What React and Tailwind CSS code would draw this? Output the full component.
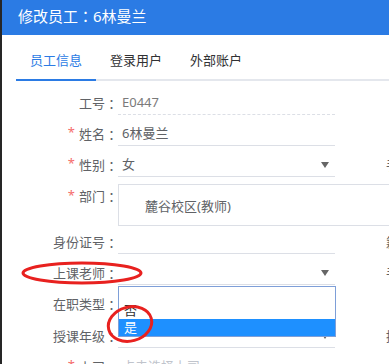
import React from 'react'

// small filled caret used by the select fields
function Caret() {
  return (
    <svg width="8" height="6" viewBox="0 0 8 6" className="shrink-0">
      <path d="M0 0 H8 L4 6 Z" fill="#666" />
    </svg>
  )
}

// full-width colon, centred like the original UI font
function Colon() {
  return <span className="font-['Noto_Sans_CJK_TC',sans-serif]">：</span>
}

function Label({ text, required, h = 'h-[23px]' }) {
  return (
    <div className={`w-[116px] shrink-0 ${h} flex items-center justify-end text-[13px] text-[#606266] whitespace-nowrap`}>
      {required && <span className="text-[#f56c6c] mr-[4px] -mt-[3px]">*</span>}
      {text}
      <Colon />
    </div>
  )
}

function Field({ children, dashed, select, className = '' }) {
  return (
    <div
      className={`w-[217px] shrink-0 h-[23px] flex items-center justify-between pl-[4px] pr-[6px] border-b border-[#dcdfe6] text-[13px] ${
        dashed ? 'border-dashed' : ''
      } ${className}`}
    >
      <span className="whitespace-nowrap">{children}</span>
      {select && <Caret />}
    </div>
  )
}

function SideLabel({ text }) {
  return (
    <div className="ml-[51px] shrink-0 h-[23px] flex items-center text-[13px] text-[#606266] whitespace-nowrap">
      {text}
      <Colon />
    </div>
  )
}

export default function App() {
  return (
    <div className="relative w-[389px] h-[364px] overflow-hidden flex bg-[#262626] font-['Noto_Sans','Noto_Sans_CJK_SC',sans-serif]">
      <div className="w-[2px] shrink-0" />
      <div className="flex-1 min-w-0 bg-white flex flex-col">
        {/* header */}
        <div className="h-[35px] shrink-0 bg-[#2b7be4] text-white text-[15px] pl-[16px] pt-[5px] whitespace-nowrap">
          修改员工<Colon />6林曼兰
        </div>

        {/* tabs */}
        <div className="ml-[14px] mt-[8px] flex border-b-2 border-[#e4e7ed] text-[13px]">
          <div className="w-[80px] h-[38px] -mb-[2px] flex items-center justify-center border-b-2 border-[#2b7be4] text-[#2b7be4]">
            员工信息
          </div>
          <div className="w-[80px] h-[36px] flex items-center justify-center text-[#303133]">登录用户</div>
          <div className="w-[80px] h-[36px] flex items-center justify-center text-[#303133]">外部账户</div>
        </div>

        {/* form */}
        <div className="flex flex-col">
          <div className="flex mt-[11px]">
            <Label text="工号" />
            <Field dashed className="text-[#7a7a7a]">E0447</Field>
          </div>

          <div className="flex mt-[8px]">
            <Label text="姓名" required />
            <Field className="text-[#606266]">6林曼兰</Field>
          </div>

          <div className="flex mt-[8px]">
            <Label text="性别" required />
            <Field select className="text-[#606266]">女</Field>
            <SideLabel text="手机号" />
          </div>

          <div className="flex mt-[7px]">
            <Label text="部门" required h="h-[26px]" />
            <div className="w-[300px] shrink-0 h-[42px] border border-[#dcdfe6] pl-[26px] pt-[4px] flex items-center text-[13px] text-[#606266] whitespace-nowrap">
              麓谷校区(教师)
            </div>
          </div>

          <div className="flex mt-[5px]">
            <Label text="身份证号" />
            <Field />
            <SideLabel text="籍贯" />
          </div>

          <div className="flex mt-[8px]">
            <Label text="上课老师" />
            <div className="relative">
              <Field select />
              {/* open native list */}
              <div className="absolute left-0 top-[24px] w-[218px] border border-[#7e9fd8] bg-white text-[13px] z-10">
                <div className="h-[15px]" />
                <div className="h-[17px] pl-[5px] flex items-center text-[#303133]">否</div>
                <div className="h-[17px] pl-[5px] flex items-center bg-[#1e90ff] text-white">是</div>
              </div>
            </div>
            <SideLabel text="手写签名" />
          </div>

          <div className="flex mt-[8px]">
            <Label text="在职类型" />
            <Field select />
          </div>

          <div className="flex mt-[9px]">
            <Label text="授课年级" />
            <Field select />
            <SideLabel text="授课科目" />
          </div>

          <div className="flex mt-[8px]">
            <Label text="上司" required />
            <Field className="text-[#c0c4cc]">点击选择上司</Field>
            <SideLabel text="入职日期" />
          </div>
        </div>
      </div>

      {/* red annotation marks */}
      <svg className="absolute inset-0 pointer-events-none z-20" width="389" height="364" viewBox="0 0 389 364">
        <ellipse cx="82" cy="273" rx="59" ry="10" fill="none" stroke="#e8211f" strokeWidth="3" />
        <ellipse cx="130" cy="324" rx="22" ry="17" transform="rotate(-15 130 324)" fill="none" stroke="#e8211f" strokeWidth="3" />
      </svg>
    </div>
  )
}
